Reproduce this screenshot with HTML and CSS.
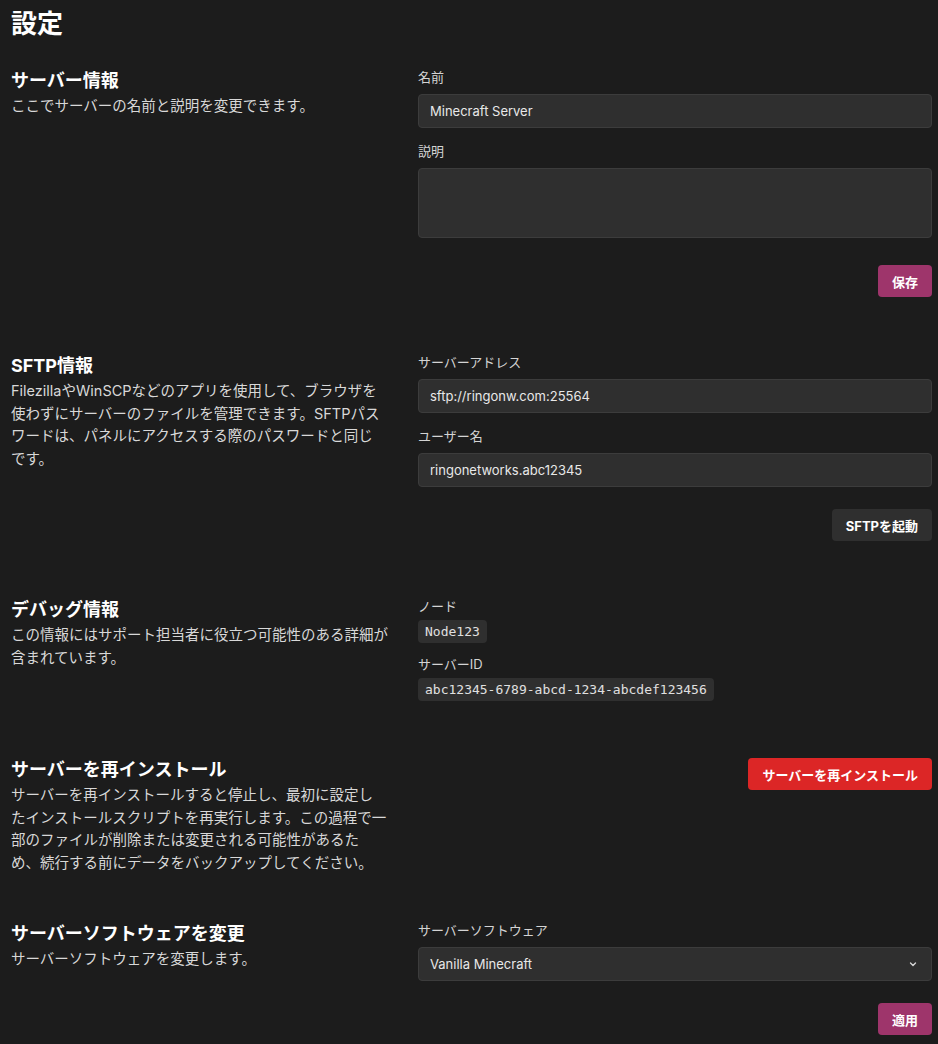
FILE: index.html
```html
<!DOCTYPE html>
<html lang="ja">
<head>
  <meta charset="UTF-8" />
  <meta name="viewport" content="width=device-width, initial-scale=1.0"/>
  <title>設定</title>
  <link rel="stylesheet" href="styles.css">
</head>
<body>
  <h1>設定</h1>

  <!-- サーバー情報 -->
  <section class="setting">
    <div class="info">
      <h2>サーバー情報</h2>
      <p>ここでサーバーの名前と説明を変更できます。</p>
    </div>
    <div class="form">
      <label for="name">名前</label>
      <input type="text" id="name" value="Minecraft Server">

      <label for="desc">説明</label>
      <textarea id="desc"></textarea>

      <div class="actions">
        <button class="btn primary">保存</button>
      </div>
    </div>
  </section>

  <!-- SFTP情報 -->
  <section class="setting">
    <div class="info">
      <h2>SFTP情報</h2>
      <p>FilezillaやWinSCPなどのアプリを使用して、ブラウザを使わずにサーバーのファイルを管理できます。SFTPパスワードは、パネルにアクセスする際のパスワードと同じ<br>です。</p>
    </div>
    <div class="form">
      <label for="addr">サーバーアドレス</label>
      <input type="text" id="addr" value="sftp://ringonw.com:25564" readonly>

      <label for="user">ユーザー名</label>
      <input type="text" id="user" value="ringonetworks.abc12345" readonly>

      <div class="actions">
        <button class="btn dark">SFTPを起動</button>
      </div>
    </div>
  </section>

  <!-- デバッグ情報 -->
  <section class="setting">
    <div class="info">
      <h2>デバッグ情報</h2>
      <p>この情報にはサポート担当者に役立つ可能性のある詳細が含まれています。</p>
    </div>
    <div class="form debug">
      <span class="label">ノード</span>
      <code>Node123</code>

      <span class="label">サーバーID</span>
      <code>abc12345-6789-abcd-1234-abcdef123456</code>
    </div>
  </section>

  <!-- 再インストール -->
  <section class="setting">
    <div class="info">
      <h2>サーバーを再インストール</h2>
      <p>サーバーを再インストールすると停止し、最初に設定し<br>たインストールスクリプトを再実行します。この過程で一<br>部のファイルが削除または変更される可能性があるた<br>め、続行する前にデータをバックアップしてください。</p>
    </div>
    <div class="form">
      <div class="actions top">
        <button class="btn danger">サーバーを再インストール</button>
      </div>
    </div>
  </section>

  <!-- ソフトウェア変更 -->
  <section class="setting">
    <div class="info">
      <h2>サーバーソフトウェアを変更</h2>
      <p>サーバーソフトウェアを変更します。</p>
    </div>
    <div class="form">
      <label for="soft">サーバーソフトウェア</label>
      <div class="select-wrap">
        <select id="soft">
          <option>Vanilla Minecraft</option>
          <option>Paper</option>
          <option>Forge</option>
        </select>
        <svg class="chevron" width="10" height="10" viewBox="0 0 10 10">
          <path d="M2.5 4 L5 6.5 L7.5 4" fill="none" stroke="#d6d6d6" stroke-width="1.4" stroke-linecap="round" stroke-linejoin="round"/>
        </svg>
      </div>

      <div class="actions">
        <button class="btn primary">適用</button>
      </div>
    </div>
  </section>
</body>
</html>
```

FILE: styles.css
```css
body {
  margin: 0;
  padding: 6px 6px 0 11px;
  background: #1c1c1c;
  color: #e6e6e6;
  font-family: Inter, "Noto Sans CJK JP", sans-serif;
}
h1 {
  margin: 0 0 25px;
  font-size: 26px;
  line-height: 36px;
  font-weight: 700;
  color: #fff;
}
.setting {
  display: grid;
  grid-template-columns: 379px 1fr;
  column-gap: 28px;
  margin-bottom: 46px;
}
.info h2 {
  margin: 0;
  font-size: 18px;
  line-height: 28px;
  font-weight: 700;
  color: #fff;
}
.info p {
  margin: 0;
  font-size: 14.5px;
  line-height: 22.5px;
  color: #d8d8d8;
}
.form {
  display: flex;
  flex-direction: column;
  padding-bottom: 9px;
}
label,
.label {
  display: block;
  font-size: 13px;
  line-height: 20px;
  color: #d4d4d4;
  margin-bottom: 7px;
}
input,
textarea,
select {
  box-sizing: border-box;
  width: 100%;
  background: #2f2f2f;
  border: 1px solid #3c3c3c;
  border-radius: 4px;
  color: #e8e8e8;
  font-family: Inter, "Noto Sans CJK JP", sans-serif;
  font-size: 13px;
  padding: 0 11px;
  margin: 0 0 13px;
  outline: none;
}
input {
  height: 34px;
}
textarea {
  height: 70px;
  resize: none;
  padding: 8px 11px;
  margin-bottom: 18px;
}
.select-wrap {
  position: relative;
}
select {
  height: 34px;
  appearance: none;
  -webkit-appearance: none;
}
.chevron {
  position: absolute;
  right: 14px;
  top: 12px;
}
.actions {
  display: flex;
  justify-content: flex-end;
  margin-top: 9px;
}
.actions.top {
  margin-top: 2px;
}
.btn {
  height: 32px;
  padding: 0 14px;
  border: none;
  border-radius: 4px;
  font-family: Inter, "Noto Sans CJK JP", sans-serif;
  font-size: 13px;
  font-weight: 700;
  color: #fff;
  cursor: pointer;
}
.primary {
  background: #9e356b;
}
.dark {
  background: #2f2f2f;
}
.danger {
  background: #dc2626;
}
.debug .label {
  margin-bottom: 4px;
}
code {
  align-self: flex-start;
  background: #2f2f2f;
  border-radius: 4px;
  font-family: "DejaVu Sans Mono", monospace;
  font-size: 13px;
  line-height: 23px;
  padding: 0 7px;
  color: #e0e0e0;
}
.debug code:first-of-type {
  margin-bottom: 11px;
}
```
